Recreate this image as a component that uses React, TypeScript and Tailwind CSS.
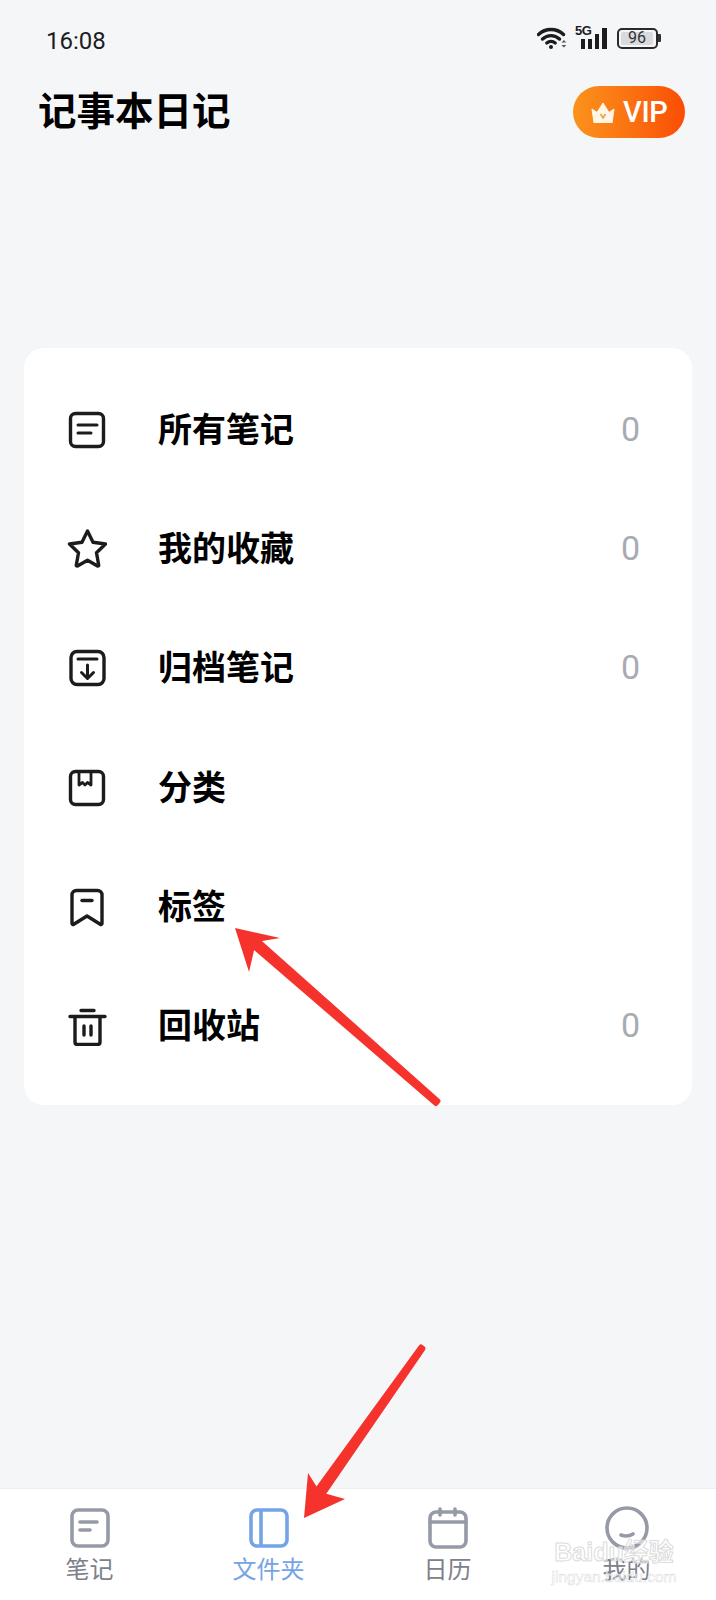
import React from "react";

const CJK = "font-['Roboto','Noto_Sans_CJK_SC',sans-serif]";

function Ico({ children, w = 40, h = 40, className = "" }: { children: React.ReactNode; w?: number; h?: number; className?: string }) {
  return (
    <svg width={w} height={h} viewBox={`0 0 ${w} ${h}`} fill="none" stroke="currentColor" strokeWidth={3.4} strokeLinecap="round" strokeLinejoin="round" className={className}>
      {children}
    </svg>
  );
}

const NoteIcon = () => (
  <Ico>
    <rect x="3.500" y="3.500" width="33" height="33" rx="5" />
    <path d="M11 15h19M11 23h13" strokeWidth={3} />
  </Ico>
);
const StarIcon = () => (
  <Ico>
    <path d="M20.500 2 26 13.200 38.500 15 29.500 23.700 31.700 36c.1.800-.5 1.200-1.200.9L20.500 31.200l-10 5.700c-.7.300-1.300-.1-1.200-.9L11.500 23.700 2.500 15 15 13.200Z" />
  </Ico>
);
const ArchiveIcon = () => (
  <Ico>
    <rect x="4" y="3.500" width="33" height="33" rx="6" />
    <path d="M11 11h19M20.500 17v13M14.500 24.500l6 6 6-6" strokeWidth={3} />
  </Ico>
);
const BoxIcon = () => (
  <Ico>
    <rect x="3.500" y="3.500" width="33" height="33" rx="5" />
    <path d="M12 4v13l3.500-2.500L18 17l2.500-2.500L24 17V4" strokeWidth={2.8} />
  </Ico>
);
const TagIcon = () => (
  <Ico>
    <path d="M5 8c0-2.500 2-4.500 4.500-4.500h21C33 3.500 35 5.500 35 8v28.500c0 1-1 1.300-1.800.8L20 29 6.800 37.300c-.8.500-1.800.2-1.800-.8Z" />
    <path d="M15 13.500h10" />
  </Ico>
);
const TrashIcon = () => (
  <Ico>
    <path d="M3 10.500h35M14 4.500h13" />
    <path d="M8 11v25c0 1.500 1 2.500 2.500 2.500h20c1.500 0 2.500-1 2.500-2.500V11" />
    <path d="M17 20v9M24 20v9" />
  </Ico>
);

const rows = [
  { icon: <NoteIcon />, label: "所有笔记", count: "0" },
  { icon: <StarIcon />, label: "我的收藏", count: "0" },
  { icon: <ArchiveIcon />, label: "归档笔记", count: "0" },
  { icon: <BoxIcon />, label: "分类", count: "" },
  { icon: <TagIcon />, label: "标签", count: "" },
  { icon: <TrashIcon />, label: "回收站", count: "0" },
];

function StatusIcons() {
  return (
    <div className="flex items-center gap-[8px] text-[#1c1c1e]">
      <svg width="30" height="22" viewBox="0 0 30 22" fill="none" stroke="currentColor" strokeWidth={3.4} strokeLinecap="round">
        <path d="M1.500 7.500C8.500 .8 19.500 .8 26.500 7.500" />
        <path d="M5.500 12c5-4.500 12-4.500 17 0" />
        <path d="M9.800 16c2.500-2 6-2 8.400 0" />
        <circle cx="14" cy="20" r="2" fill="currentColor" stroke="none" />
        <path d="M24.500 15.500l2.400-2.600 2.400 2.600zM24.500 18l2.400 2.600 2.400-2.600z" fill="#555" stroke="none" />
      </svg>
      <div className="relative w-[32px] h-[22px]">
        <span className="absolute left-0 top-[-3px] text-[13px] font-bold leading-[14px] tracking-[-0.5px] font-['Liberation_Sans',sans-serif]">5G</span>
        <div className="absolute inset-0 flex items-end justify-end gap-[3px]">
          <div className="w-[4px] h-[10px] bg-[#1c1c1e]" />
          <div className="w-[4px] h-[10px] bg-[#1c1c1e]" />
          <div className="w-[4px] h-[15px] bg-[#1c1c1e]" />
          <div className="w-[5px] h-[21px] bg-[#1c1c1e]" />
        </div>
      </div>
      <div className="flex items-center ml-[2px]">
        <div className="w-[41px] h-[21px] rounded-[5px] border-2 border-[#2a2a2a] p-[2px] flex">
          <div className="w-[32px] h-full rounded-[2px] bg-[#d9dade] flex items-center justify-center text-[16px] leading-none text-[#333] font-['Roboto',sans-serif]">96</div>
        </div>
        <div className="w-[3px] h-[8px] bg-[#333] rounded-r-[1px]" />
      </div>
    </div>
  );
}

function VipBadge() {
  return (
    <div className="w-[112px] h-[52px] rounded-[26px] bg-gradient-to-r from-[#fb921c] to-[#f94c04] flex items-center pl-[18px] gap-[8px] text-white">
      <svg width="24" height="21" viewBox="0 0 24 21">
        <path d="M1 7l5 3.500L12 1l6 9.500L23 7l-2 14H3Z" fill="#fff6e8" stroke="#fff6e8" strokeWidth="1" strokeLinejoin="round" />
        <path d="M9.500 12l2.500 4 2.500-4" fill="none" stroke="#e9a24a" strokeWidth="1.600" />
      </svg>
      <span className="text-[29px] font-medium leading-none font-['Roboto',sans-serif] tracking-[-0.3px]">VIP</span>
    </div>
  );
}

const NavNote = () => (
  <svg width="40" height="40" viewBox="0 0 40 40" fill="none" stroke="#959aa6" strokeWidth={3.600} strokeLinecap="round">
    <rect x="2" y="2" width="36" height="36" rx="6" />
    <path d="M10 14h17M10 22h10" />
  </svg>
);
const NavFolder = () => (
  <svg width="40" height="40" viewBox="0 0 40 40" fill="none" stroke="#75a4e6" strokeWidth={3.600}>
    <rect x="2" y="2" width="36" height="36" rx="6" />
    <path d="M12 2v36" />
  </svg>
);
const NavCalendar = () => (
  <svg width="40" height="42" viewBox="0 0 40 42" fill="none" stroke="#959aa6" strokeWidth={3.600} strokeLinecap="round">
    <rect x="2" y="5" width="36" height="35" rx="6" />
    <path d="M2 15h36" />
    <path d="M12 2v6M27 2v6" />
  </svg>
);
const NavMine = () => (
  <svg width="44" height="44" viewBox="0 0 44 44" fill="none" stroke="#959aa6" strokeWidth={3.600} strokeLinecap="round">
    <circle cx="22" cy="22" r="20" />
    <path d="M16 29c4 1.500 8 1.500 12-1" />
  </svg>
);

const tabs = [
  { icon: <NavNote />, label: "笔记", color: "text-[#7d818a]" },
  { icon: <NavFolder />, label: "文件夹", color: "text-[#75a4e6]" },
  { icon: <NavCalendar />, label: "日历", color: "text-[#7d818a]" },
  { icon: <NavMine />, label: "我的", color: "text-[#7d818a]" },
];

export default function App() {
  return (
    <div className={`relative w-[716px] h-[1600px] overflow-hidden bg-[#f5f6f8] flex flex-col ${CJK}`}>
      <div className="h-[84px] pl-[46px] pr-[55px] pt-[27px] flex items-start justify-between">
        <span className="text-[24px] leading-[28px] text-[#1c1c1e] font-['Roboto',sans-serif]">16:08</span>
        <StatusIcons />
      </div>
      <div className="h-[56px] pl-[38px] pr-[31px] flex items-center justify-between">
        <h1 className="text-[38.500px] font-bold leading-none text-black">记事本日记</h1>
        <VipBadge />
      </div>

      <div className="flex-1 pt-[208px] px-[24px]">
        <div className="h-[757px] rounded-[20px] bg-white pt-[22px]">
          {rows.map((r) => (
            <div key={r.label} className="h-[119.300px] pl-[43px] pr-[52px] flex items-center">
              <div className="w-[91px] text-[#1c1c1e] flex items-center">{r.icon}</div>
              <span className="flex-1 text-[34px] font-bold leading-none text-black">{r.label}</span>
              {r.count && <span className="text-[34px] leading-none mt-[-2px] text-[#a9abb0] font-['Roboto',sans-serif]">{r.count}</span>}
            </div>
          ))}
        </div>
      </div>

      <nav className="h-[112px] bg-white border-t border-[#eeeff1] grid grid-cols-4 pt-[17px]">
        {tabs.map((t) => (
          <div key={t.label} className="flex flex-col items-center">
            <div className="h-[44px] flex items-center justify-center">{t.icon}</div>
            <span className={`mt-[5px] text-[24px] leading-[30px] ${t.color}`}>{t.label}</span>
          </div>
        ))}
      </nav>

      {/* annotation arrows drawn over the screenshot */}
      <svg className="absolute inset-0 pointer-events-none" width="716" height="1600" viewBox="0 0 716 1600">
        <path d="M438 1101 436 1103.500 251.700 944.700 256.300 939.300Z" fill="#f5322c" stroke="#f5322c" strokeWidth="5" strokeLinejoin="round" />
        <path d="M235 928 280 938 256 942 249 972Z" fill="#f5322c" />
        <path d="M423 1348.500 421 1347 317 1490 323 1494Z" fill="#f5322c" stroke="#f5322c" strokeWidth="5" strokeLinejoin="round" />
        <path d="M304 1518 308 1473 320 1492 345 1499Z" fill="#f5322c" />
      </svg>

      {/* Baidu watermark */}
      <div className="absolute left-[548px] top-[1538px] w-[132px] pointer-events-none flex flex-col items-center whitespace-nowrap">
        <div className="text-[25px] leading-[28px] font-bold text-white/50 [-webkit-text-stroke:1px_#dcdcdc] font-['Liberation_Sans','Noto_Sans_CJK_SC',sans-serif]">Baidu经验</div>
        <div className="mt-[2px] text-[15.500px] leading-[18px] text-white/50 [-webkit-text-stroke:0.5px_#dcdcdc] font-['Liberation_Sans',sans-serif]">jingyan.baidu.com</div>
      </div>
    </div>
  );
}
